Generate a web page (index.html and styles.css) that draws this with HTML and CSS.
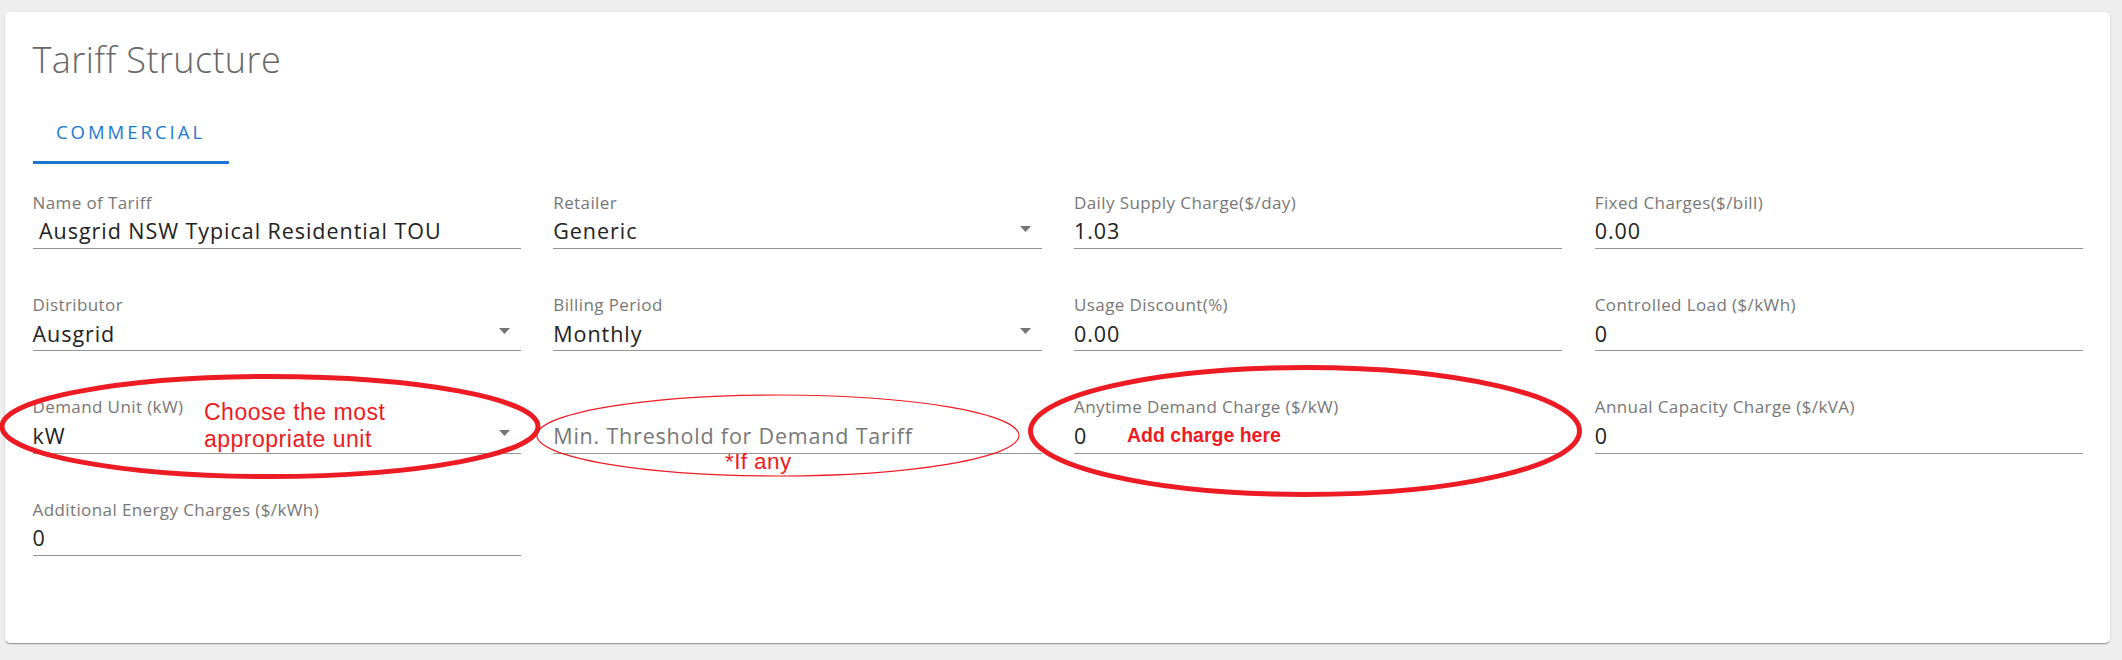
FILE: index.html
```html
<!DOCTYPE html>
<html lang="en">
<head>
<meta charset="utf-8">
<title>Tariff Structure</title>
<link rel="stylesheet" href="styles.css">
</head>
<body>
<main class="page">
  <section class="card">
    <h1 class="card-title">Tariff Structure</h1>
    <div class="tabs">
      <div class="tab tab-active">COMMERCIAL</div>
    </div>
    <div class="form-grid">
      <div class="field">
        <span class="field-label">Name of Tariff</span>
        <span class="field-value"> Ausgrid NSW Typical Residential TOU</span>
      </div>
      <div class="field">
        <span class="field-label">Retailer</span>
        <span class="field-value field-select">Generic<svg class="select-arrow" viewBox="0 0 11 6"><polygon points="0,0 11,0 5.5,6"/></svg></span>
      </div>
      <div class="field">
        <span class="field-label">Daily Supply Charge($/day)</span>
        <span class="field-value">1.03</span>
      </div>
      <div class="field">
        <span class="field-label">Fixed Charges($/bill)</span>
        <span class="field-value">0.00</span>
      </div>

      <div class="field">
        <span class="field-label">Distributor</span>
        <span class="field-value field-select">Ausgrid<svg class="select-arrow" viewBox="0 0 11 6"><polygon points="0,0 11,0 5.5,6"/></svg></span>
      </div>
      <div class="field">
        <span class="field-label">Billing Period</span>
        <span class="field-value field-select">Monthly<svg class="select-arrow" viewBox="0 0 11 6"><polygon points="0,0 11,0 5.5,6"/></svg></span>
      </div>
      <div class="field">
        <span class="field-label">Usage Discount(%)</span>
        <span class="field-value">0.00</span>
      </div>
      <div class="field">
        <span class="field-label">Controlled Load ($/kWh)</span>
        <span class="field-value">0</span>
      </div>

      <div class="field">
        <span class="field-label">Demand Unit (kW)</span>
        <span class="field-value field-select">kW<svg class="select-arrow" viewBox="0 0 11 6"><polygon points="0,0 11,0 5.5,6"/></svg></span>
      </div>
      <div class="field">
        <span class="field-label"></span>
        <span class="field-value field-placeholder">Min. Threshold for Demand Tariff</span>
      </div>
      <div class="field">
        <span class="field-label">Anytime Demand Charge ($/kW)</span>
        <span class="field-value">0</span>
      </div>
      <div class="field">
        <span class="field-label">Annual Capacity Charge ($/kVA)</span>
        <span class="field-value">0</span>
      </div>

      <div class="field">
        <span class="field-label">Additional Energy Charges ($/kWh)</span>
        <span class="field-value">0</span>
      </div>
    </div>
  </section>

  <div class="annotations">
    <svg class="annotation-marks" viewBox="0 0 2122 660" width="2122" height="660">
      <ellipse class="mark-thick" cx="270" cy="426.5" rx="268" ry="50"/>
      <ellipse class="mark-thin" cx="778" cy="435.5" rx="241" ry="40.5"/>
      <ellipse class="mark-thick" cx="1305" cy="431" rx="274.5" ry="63.5"/>
    </svg>
    <div class="note note-unit">Choose the most<br>appropriate unit</div>
    <div class="note note-any">*If any</div>
    <div class="note note-charge">Add charge here</div>
  </div>
</main>
</body>
</html>
```
FILE: styles.css
```css
html, body {
  margin: 0;
  padding: 0;
}

body {
  background: #eeeeee;
  font-family: "Open Sans", "Noto Sans", sans-serif;
  width: 2122px;
  height: 660px;
  overflow: hidden;
}

.page {
  position: relative;
  padding: 12px 12px 0 5px;
}

.card {
  background: #ffffff;
  border-radius: 5px;
  box-shadow: 0 2px 1px -1px rgba(0,0,0,0.2), 0 1px 1px 0 rgba(0,0,0,0.14), 0 1px 3px 0 rgba(0,0,0,0.12);
  padding: 26px 27px 87px 27.5px;
}

.card-title {
  margin: 0;
  font-size: 36px;
  line-height: 44px;
  font-weight: 300;
  color: #666666;
  letter-spacing: 0.4px;
}

.tabs {
  display: flex;
  margin-top: 17px;
}

.tab {
  box-sizing: border-box;
  width: 196px;
  height: 65px;
  padding-top: 3px;
  display: flex;
  align-items: center;
  justify-content: center;
  font-size: 18.5px;
  font-weight: 500;
  letter-spacing: 3px;
  color: #1e78d2;
}

.tab-active {
  border-bottom: 3px solid #1976d2;
}

.form-grid {
  margin-top: 28.8px;
  display: grid;
  grid-template-columns: repeat(4, 1fr);
  column-gap: 32.5px;
  row-gap: 46.1px;
}

.field {
  display: flex;
  flex-direction: column;
}

.field-label {
  display: block;
  height: 20px;
  font-size: 17px;
  line-height: 20px;
  letter-spacing: 0.4px;
  color: #777777;
  white-space: nowrap;
}

.field-value {
  display: flex;
  align-items: flex-start;
  justify-content: space-between;
  margin-top: 5.6px;
  height: 26px;
  padding-bottom: 3.6px;
  border-bottom: 1px solid #949494;
  font-size: 21.5px;
  line-height: 26px;
  letter-spacing: 0.95px;
  color: #222222;
  white-space: pre;
}

.field-placeholder {
  color: #777777;
  letter-spacing: 0.8px;
}

.select-arrow {
  width: 11px;
  height: 6px;
  margin-top: 7.5px;
  margin-right: 11px;
  fill: #757575;
  flex: none;
}

.annotations {
  position: absolute;
  left: 0;
  top: 0;
  width: 2122px;
  height: 660px;
  pointer-events: none;
}

.annotation-marks {
  position: absolute;
  left: 0;
  top: 0;
}

.mark-thick {
  fill: none;
  stroke: #ed1c24;
  stroke-width: 5;
}

.mark-thin {
  fill: none;
  stroke: #ed1c24;
  stroke-width: 1.2;
}

.note {
  position: absolute;
  font-family: "Liberation Sans", Arial, sans-serif;
  color: #ed1c24;
  white-space: nowrap;
}

.note-unit {
  left: 204px;
  top: 398.5px;
  font-size: 23px;
  line-height: 27px;
  letter-spacing: 0.5px;
}

.note-any {
  left: 725px;
  top: 449px;
  font-size: 22.5px;
  line-height: 26px;
  letter-spacing: 0.4px;
}

.note-charge {
  left: 1127px;
  top: 424px;
  font-size: 19.5px;
  line-height: 22px;
  font-weight: bold;
}
```
